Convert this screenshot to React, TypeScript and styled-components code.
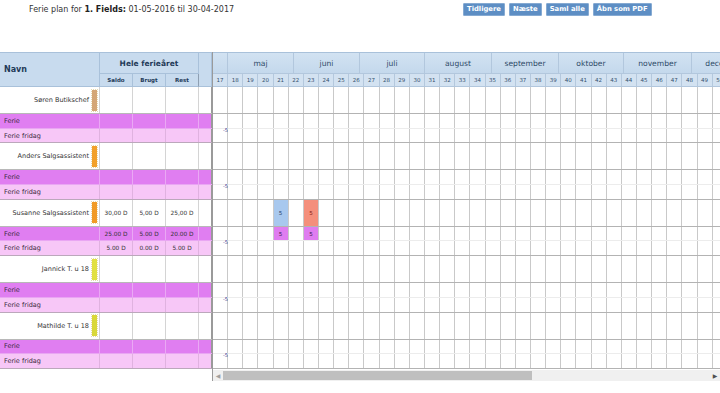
import React from "react";
import styled, { createGlobalStyle } from "styled-components";

const GlobalStyle = createGlobalStyle`
  body {
    margin: 0;
    background: #fff;
    font-family: "DejaVu Sans", Verdana, sans-serif;
    color: #2a2a2a;
  }
`;

const LEFT_COLS = "100px 33px 33px 33px 13px";
const WEEK_W = 15.15;
const EMP_H = 27;
const SUB_H = 14.7;

// week 17 through 50 is what fits in the visible part of the plan
const weeks = Array.from({ length: 34 }, (_, i) => 17 + i);

const months = [
  { name: "", width: 15 },
  { name: "maj", width: 66 },
  { name: "juni", width: 66 },
  { name: "juli", width: 65 },
  { name: "august", width: 67 },
  { name: "september", width: 67 },
  { name: "oktober", width: 65 },
  { name: "november", width: 68 },
  { name: "december", width: 66 },
];

type Mark = { week: number; bg: string; color: string };

type Person = {
  name: string;
  color: string;
  emp: string[];
  ferie: string[];
  fridag: string[];
  empMarks: Mark[];
  ferieMarks: Mark[];
};

const blank = ["", "", ""];

const people: Person[] = [
  { name: "Søren Butikschef", color: "#d4a677", emp: blank, ferie: blank, fridag: blank, empMarks: [], ferieMarks: [] },
  { name: "Anders Salgsassistent", color: "#f2a02a", emp: blank, ferie: blank, fridag: blank, empMarks: [], ferieMarks: [] },
  {
    name: "Susanne Salgsassistent",
    color: "#f19a26",
    emp: ["30,00 D", "5,00 D", "25,00 D"],
    ferie: ["25.00 D", "5.00 D", "20.00 D"],
    fridag: ["5.00 D", "0.00 D", "5.00 D"],
    empMarks: [
      { week: 21, bg: "#a8c8ee", color: "#2b3f6a" },
      { week: 23, bg: "#f48f7c", color: "#8a2414" },
    ],
    ferieMarks: [
      { week: 21, bg: "#df7cf0", color: "#3b2250" },
      { week: 23, bg: "#df7cf0", color: "#3b2250" },
    ],
  },
  { name: "Jannick T. u 18", color: "#e1e042", emp: blank, ferie: blank, fridag: blank, empMarks: [], ferieMarks: [] },
  { name: "Mathilde T. u 18", color: "#d9d83a", emp: blank, ferie: blank, fridag: blank, empMarks: [], ferieMarks: [] },
];

/* top bar */

const TopBar = styled.div`
  height: 52px;
  display: grid;
  grid-template-columns: 463px auto;
  align-items: start;
  padding-top: 3px;
  box-sizing: border-box;
`;

const Title = styled.div`
  padding-left: 29px;
  font-size: 8px;
  line-height: 13px;
  color: #333;
  b {
    color: #222;
  }
`;

const ButtonGroup = styled.div`
  display: flex;
  gap: 4px;
`;

const Button = styled.button`
  height: 13px;
  padding: 0 3px;
  background: #5d8ec4;
  border: 1px solid #86aad2;
  border-radius: 1px;
  color: #fff;
  font-family: "DejaVu Sans", Verdana, sans-serif;
  font-size: 6.8px;
  font-weight: bold;
  line-height: 11px;
  cursor: pointer;
`;

/* plan layout */

const Plan = styled.div`
  display: flex;
  align-items: flex-start;
`;

const LeftTable = styled.div`
  width: 212px;
  flex: none;
  border-top: 1px solid #a9c1da;
`;

const LeftHead = styled.div`
  display: grid;
  grid-template-columns: ${LEFT_COLS};
  grid-template-rows: 21px 13px;
  background: #c8dbee;
  color: #1f3a58;
  font-weight: bold;
`;

const HeadCell = styled.div<{ $span?: string; $rows?: number; $size: number; $align?: string }>`
  grid-column: ${(p) => p.$span ?? "auto"};
  grid-row: span ${(p) => p.$rows ?? 1};
  display: flex;
  align-items: center;
  justify-content: ${(p) => p.$align ?? "center"};
  padding-left: ${(p) => (p.$align ? "4px" : "0")};
  font-size: ${(p) => p.$size}px;
  border-right: 1px solid #a9c1da;
  border-bottom: 1px solid #a9c1da;
  box-sizing: border-box;
  &:last-child {
    border-right-color: #8e9fb2;
  }
`;

const LeftRow = styled.div<{ $h: number; $bg: string; $line: string; $cellLine: string }>`
  display: grid;
  grid-template-columns: ${LEFT_COLS};
  height: ${(p) => p.$h}px;
  background: ${(p) => p.$bg};
  border-bottom: 1px solid ${(p) => p.$line};
  box-sizing: border-box;
  & > div {
    border-right: 1px solid ${(p) => p.$cellLine};
  }
  & > div:last-child {
    border-right-color: #9a9a9a;
  }
`;

const NameCell = styled.div`
  display: flex;
  align-items: center;
  justify-content: flex-end;
  gap: 3px;
  padding-right: 2px;
  font-size: 6.5px;
  color: #333;
`;

const Pip = styled.span<{ $color: string }>`
  width: 5px;
  height: 21px;
  background: ${(p) => p.$color};
  outline: 1px dotted #e6d9b0;
`;

const LabelCell = styled.div`
  display: flex;
  align-items: center;
  padding-left: 4px;
  font-size: 6.5px;
  color: #3a2a40;
`;

const ValueCell = styled.div`
  display: flex;
  align-items: center;
  justify-content: center;
  font-size: 5.8px;
  color: #333;
`;

/* right side: weeks */

const RightPanel = styled.div`
  flex: 1;
  min-width: 0;
  border-left: 1px solid #9a9a9a;
`;

const Scroller = styled.div`
  overflow: hidden;
  border-top: 1px solid #a9c1da;
`;

const MonthRow = styled.div`
  display: flex;
  height: 21px;
`;

const MonthCell = styled.div<{ $w: number }>`
  flex: none;
  width: ${(p) => p.$w}px;
  display: flex;
  align-items: center;
  justify-content: center;
  background: linear-gradient(#d2e2f2, #c4d8ec);
  border-right: 1px solid #b2c7dd;
  border-bottom: 1px solid #b2c7dd;
  box-sizing: border-box;
  font-size: 7.6px;
  color: #2e4a68;
`;

const WeekGrid = styled.div<{ $h: number; $line: string }>`
  display: grid;
  grid-template-columns: repeat(${weeks.length}, ${WEEK_W}px);
  height: ${(p) => p.$h}px;
  border-bottom: 1px solid ${(p) => p.$line};
  box-sizing: border-box;
`;

const WeekHead = styled.div`
  display: flex;
  align-items: center;
  justify-content: center;
  background: #d3e2f1;
  border-right: 1px solid #b4c8dd;
  font-size: 5.5px;
  color: #34506e;
`;

const WeekCell = styled.div<{ $bg?: string; $color?: string }>`
  display: flex;
  align-items: center;
  justify-content: center;
  background: ${(p) => p.$bg ?? "#fff"};
  border-right: 1px solid #c9c9c9;
  font-size: 5.6px;
  color: ${(p) => p.$color ?? "#333"};
`;

const SubBlock = styled.div`
  position: relative;
`;

const Delta = styled.span`
  position: absolute;
  left: 10px;
  top: 12.5px;
  font-size: 5px;
  color: #3c3f96;
`;

const ScrollTrack = styled.div`
  display: flex;
  align-items: center;
  height: 11px;
  margin-top: 1px;
  background: #f0f0f0;
`;

const ScrollArrow = styled.span<{ $color: string }>`
  width: 10px;
  flex: none;
  font-size: 6px;
  text-align: center;
  color: ${(p) => p.$color};
`;

const ScrollThumb = styled.div`
  width: 309px;
  height: 9px;
  background: #bfbfbf;
`;

const Spacer = styled.div`
  flex: 1;
`;

const WeekCells = ({ marks }: { marks: Mark[] }) => (
  <>
    {weeks.map((w) => {
      const m = marks.find((k) => k.week === w);
      return (
        <WeekCell key={w} $bg={m?.bg} $color={m?.color}>
          {m ? "5" : ""}
        </WeekCell>
      );
    })}
  </>
);

export default function App() {
  return (
    <>
      <GlobalStyle />
      <TopBar>
        <Title>
          Ferie plan for <b>1. Fields:</b> 01-05-2016 til 30-04-2017
        </Title>
        <ButtonGroup>
          <Button>Tidligere</Button>
          <Button>Næste</Button>
          <Button>Saml alle</Button>
          <Button>Åbn som PDF</Button>
        </ButtonGroup>
      </TopBar>

      <Plan>
        <LeftTable>
          <LeftHead>
            <HeadCell $rows={2} $size={8} $align="flex-start">
              Navn
            </HeadCell>
            <HeadCell $span="span 3" $size={7.5}>
              Hele ferieåret
            </HeadCell>
            <HeadCell $rows={2} $size={7} />
            <HeadCell $size={5.5}>Saldo</HeadCell>
            <HeadCell $size={5.5}>Brugt</HeadCell>
            <HeadCell $size={5.5}>Rest</HeadCell>
          </LeftHead>

          {people.map((p) => (
            <React.Fragment key={p.name}>
              <LeftRow $h={EMP_H} $bg="#fff" $line="#b8b8b8" $cellLine="#d4d4d4">
                <NameCell>
                  {p.name}
                  <Pip $color={p.color} />
                </NameCell>
                {p.emp.map((v, i) => (
                  <ValueCell key={i}>{v}</ValueCell>
                ))}
                <ValueCell />
              </LeftRow>
              <LeftRow $h={SUB_H} $bg="#e07ef1" $line="#e9a6f3" $cellLine="#eaa8f4">
                <LabelCell>Ferie</LabelCell>
                {p.ferie.map((v, i) => (
                  <ValueCell key={i}>{v}</ValueCell>
                ))}
                <ValueCell />
              </LeftRow>
              <LeftRow $h={SUB_H} $bg="#f7c7f7" $line="#bba8bb" $cellLine="#e0b2e0">
                <LabelCell>Ferie fridag</LabelCell>
                {p.fridag.map((v, i) => (
                  <ValueCell key={i}>{v}</ValueCell>
                ))}
                <ValueCell />
              </LeftRow>
            </React.Fragment>
          ))}
        </LeftTable>

        <RightPanel>
          <Scroller>
            <MonthRow>
              {months.map((m, i) => (
                <MonthCell key={i} $w={m.width}>
                  {m.name}
                </MonthCell>
              ))}
            </MonthRow>
            <WeekGrid $h={13} $line="#b2c7dd">
              {weeks.map((w) => (
                <WeekHead key={w}>{w}</WeekHead>
              ))}
            </WeekGrid>

            {people.map((p) => (
              <React.Fragment key={p.name}>
                <WeekGrid $h={EMP_H} $line="#b3b3b3">
                  <WeekCells marks={p.empMarks} />
                </WeekGrid>
                <SubBlock>
                  <WeekGrid $h={SUB_H} $line="#ececec">
                    <WeekCells marks={p.ferieMarks} />
                  </WeekGrid>
                  <WeekGrid $h={SUB_H} $line="#b3b3b3">
                    <WeekCells marks={[]} />
                  </WeekGrid>
                  <Delta>-5</Delta>
                </SubBlock>
              </React.Fragment>
            ))}
          </Scroller>
          <ScrollTrack>
            <ScrollArrow $color="#a0a0a0">◀</ScrollArrow>
            <ScrollThumb />
            <Spacer />
            <ScrollArrow $color="#505050">▶</ScrollArrow>
          </ScrollTrack>
        </RightPanel>
      </Plan>
    </>
  );
}
